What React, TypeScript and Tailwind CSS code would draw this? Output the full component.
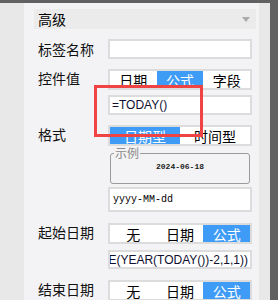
const cjk = "font-['Microsoft_YaHei','Noto_Sans_CJK_SC',sans-serif]";

type Seg = { label: string; active?: boolean };

const Segmented = ({ items, className = '' }: { items: Seg[]; className?: string }) => (
  <div className={`flex h-[21px] w-[144px] border-2 border-[#dcdcdc] bg-white ${className}`}>
    {items.map((it) => (
      <div
        key={it.label}
        className={`flex flex-1 items-center justify-center text-[14px] leading-none ${
          it.active ? 'bg-[#3f9cf6] text-white' : 'bg-white text-black'
        }`}
      >
        {it.label}
      </div>
    ))}
  </div>
);

const Label = ({ text, center = false }: { text: string; center?: boolean }) => (
  <div
    className={`w-[74px] shrink-0 pl-[4px] text-[14px] leading-none text-[#111] ${center ? 'self-center' : 'pt-[2px]'}`}
  >
    {text}
  </div>
);

export default function App() {
  return (
    <div className={`relative h-[300px] w-[278px] overflow-hidden bg-[#e8e8e8] ${cjk}`}>
      <div className="h-[3px] w-full bg-[#616161]" />
      <div className="flex h-[297px]">
        <div className="w-[24px] shrink-0 bg-[#e8e8e8]" />
        <div className="w-[235px] shrink-0 bg-[#f3f3f5] pl-[10px] pr-[3px]">
          {/* header */}
          <div className="mt-[6px] flex h-[20px] items-center justify-between bg-[#ebebeb] pl-[4px] pr-[6px]">
            <span className="text-[14px] leading-none text-black">高级</span>
            <svg width="8" height="5" viewBox="0 0 8 5">
              <path d="M0 0H8L4 5Z" fill="#ababab" />
            </svg>
          </div>

          {/* 标签名称 */}
          <div className="mt-[10px] flex">
            <Label text="标签名称" center />
            <div className="h-[20px] w-[144px] border-2 border-[#dcdcdc] bg-white" />
          </div>

          {/* 控件值 */}
          <div className="mt-[10px] flex">
            <Label text="控件值" />
            <div className="flex flex-col">
              <Segmented items={[{ label: '日期' }, { label: '公式', active: true }, { label: '字段' }]} />
              <div className="mt-[5px] flex h-[20px] w-[144px] items-center border-2 border-[#dcdcdc] bg-white pl-[2px] font-['Liberation_Sans',sans-serif] text-[12px] text-[#101030]">
                =TODAY()
              </div>
            </div>
          </div>

          {/* 格式 */}
          <div className="mt-[10px] flex">
            <Label text="格式" />
            <div className="flex flex-col">
              <Segmented items={[{ label: '日期型', active: true }, { label: '时间型' }]} />
              <fieldset className="mx-[2px] mt-[1px] h-[37px] rounded-[3px] border border-[#9a9a9a] px-[3px] pb-[3px]">
                <legend className="px-[1px] text-[12px] leading-[12px] text-[#8a8a8a]">示例</legend>
                <div className="mt-[4px] text-center font-['Liberation_Mono',monospace] text-[8px] font-bold leading-none text-[#222]">
                  2024-06-18
                </div>
              </fieldset>
              <div className="mt-[3px] flex h-[25px] w-[144px] items-center border-2 border-[#dcdcdc] bg-white pl-[3px] font-['Liberation_Mono',monospace] text-[10px] text-black">
                yyyy-MM-dd
              </div>
            </div>
          </div>

          {/* 起始日期 */}
          <div className="mt-[11px] flex">
            <Label text="起始日期" />
            <div className="flex flex-col">
              <Segmented items={[{ label: '无' }, { label: '日期' }, { label: '公式', active: true }]} />
              <div className="mt-[6px] flex h-[19px] w-[144px] items-center justify-end overflow-hidden border-2 border-[#dcdcdc] bg-white pr-[2px] font-['Liberation_Sans',sans-serif] text-[12px] whitespace-nowrap text-[#101030]">
                =DATE(YEAR(TODAY())-2,1,1))
              </div>
            </div>
          </div>

          {/* 结束日期 */}
          <div className="mt-[11px] flex">
            <Label text="结束日期" />
            <Segmented items={[{ label: '无' }, { label: '日期' }, { label: '公式', active: true }]} />
          </div>
        </div>
        <div className="w-[11px] shrink-0 bg-[#e8e8e8]" />
        <div className="w-[8px] shrink-0 bg-[#616161]" />
      </div>

      {/* red highlight box */}
      <div className="absolute left-[94px] top-[85px] h-[52px] w-[109px] border-[3px] border-[#f04444]" />
    </div>
  );
}
